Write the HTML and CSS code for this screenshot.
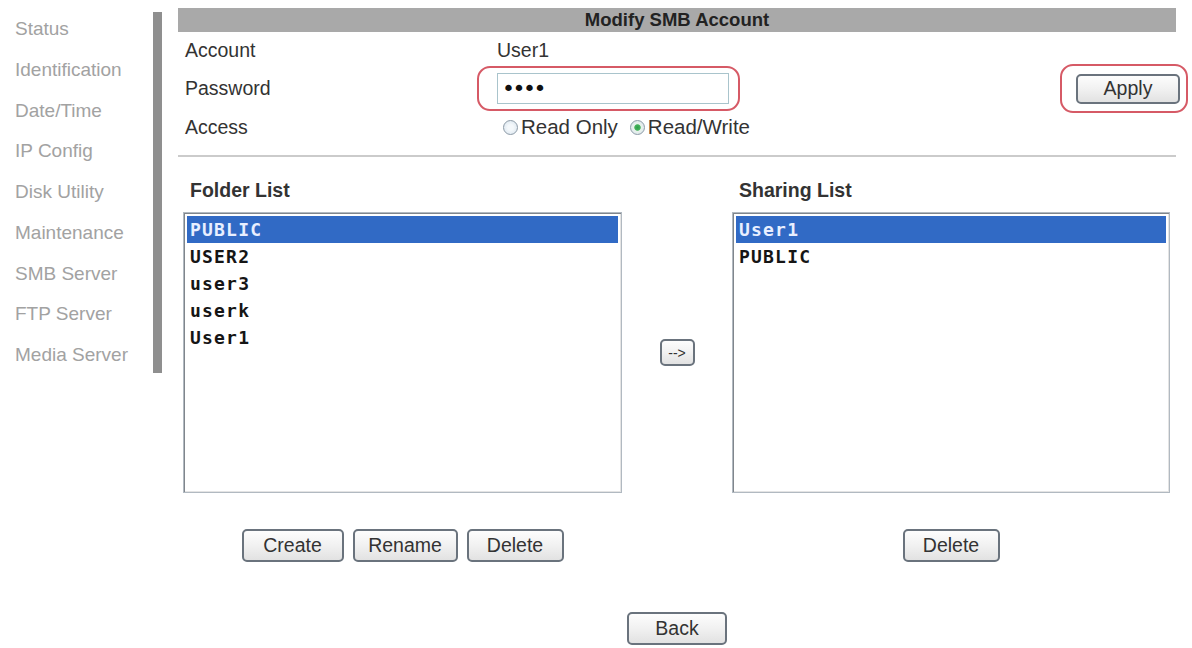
FILE: index.html
```html
<!DOCTYPE html>
<html lang="en">
<head>
    <meta charset="UTF-8">
    <meta name="viewport" content="width=device-width, initial-scale=1.0">
    <title>SMB Server</title>
    <link rel="stylesheet" href="styles.css">
</head>
<body>
    <div class="page">
        <aside class="sidebar">
            <ul>
                <li>Status</li>
                <li>Identification</li>
                <li>Date/Time</li>
                <li>IP Config</li>
                <li>Disk Utility</li>
                <li>Maintenance</li>
                <li>SMB Server</li>
                <li>FTP Server</li>
                <li>Media Server</li>
            </ul>
        </aside>
        <div class="side-bar-line"></div>

        <main class="content">
            <div class="title-bar">Modify SMB Account</div>

            <div class="account-form">
                <div class="label">Account</div>
                <div class="value">User1</div>
                <div></div>

                <div class="label">Password</div>
                <div class="value">
                    <span class="mark mark-input"><input type="password" class="pass" value="1234"></span>
                </div>
                <div class="apply-cell">
                    <span class="mark mark-apply"><button class="btn btn-apply">Apply</button></span>
                </div>

                <div class="label">Access</div>
                <div class="value radios">
                    <label><input type="radio" name="access"> Read Only</label>
                    <label><input type="radio" name="access" checked> Read/Write</label>
                </div>
                <div></div>
            </div>

            <hr class="rule">

            <div class="lists">
                <h3 class="list-title">Folder List</h3>
                <div></div>
                <h3 class="list-title">Sharing List</h3>

                <ul class="listbox">
                    <li class="selected">PUBLIC</li>
                    <li>USER2</li>
                    <li>user3</li>
                    <li>userk</li>
                    <li>User1</li>
                </ul>
                <div class="move">
                    <button class="btn btn-arrow">--&gt;</button>
                </div>
                <ul class="listbox">
                    <li class="selected">User1</li>
                    <li>PUBLIC</li>
                </ul>

                <div class="list-buttons">
                    <button class="btn btn-create">Create</button>
                    <button class="btn btn-rename">Rename</button>
                    <button class="btn btn-delete">Delete</button>
                </div>
                <div></div>
                <div class="list-buttons">
                    <button class="btn btn-delete">Delete</button>
                </div>
            </div>

            <div class="back-row">
                <button class="btn btn-back">Back</button>
            </div>
        </main>
    </div>
</body>
</html>
```

FILE: styles.css
```css
body {
    font-family: "Liberation Sans", Arial, sans-serif;
    margin: 0;
    background-color: white;
    color: #333;
}
.page {
    display: flex;
    align-items: flex-start;
}

/* left menu */
.sidebar {
    width: 153px;
    padding-top: 9px;
}
.sidebar ul {
    list-style: none;
    margin: 0;
    padding: 0 0 0 15px;
}
.sidebar li {
    font-size: 19px;
    line-height: 40.75px;
    color: #a2a2a2;
    white-space: nowrap;
}
.side-bar-line {
    width: 9px;
    height: 361px;
    margin-top: 12px;
    background-color: #8f8f8f;
}

.content {
    width: 998px;
    margin-left: 16px;
    padding-top: 8px;
}
.title-bar {
    height: 24px;
    line-height: 24px;
    background-color: #a9a9a9;
    text-align: center;
    font-weight: bold;
    font-size: 18.5px;
    color: #222;
}

/* account form */
.account-form {
    display: grid;
    grid-template-columns: 312px 1fr auto;
    grid-template-rows: 36px 40px 38px;
    align-items: center;
    padding-left: 7px;
    font-size: 19.5px;
}
.mark {
    display: inline-block;
    border: 2px solid #d65a66;
    border-radius: 13px;
    vertical-align: middle;
}
.mark-input {
    margin-left: -20px;
    padding: 5px 9px 5px 18px;
}
.pass {
    display: block;
    box-sizing: border-box;
    width: 232px;
    height: 31px;
    margin: 0;
    padding: 0 4px;
    border: 1px solid #a9c4cc;
    font-family: "DejaVu Sans", sans-serif;
    font-size: 22px;
    letter-spacing: -2.5px;
    color: #111;
    outline: none;
}
.apply-cell {
    margin-right: -12px;
}
.mark-apply {
    padding: 8px 6px 7px 14px;
}
.radios {
    display: flex;
    gap: 12px;
    margin-left: 6px;
    font-size: 20.5px;
}
.radios label {
    display: flex;
    align-items: center;
}
.radios input {
    appearance: none;
    flex-shrink: 0;
    box-sizing: border-box;
    width: 15px;
    height: 15px;
    margin: 0 3px 0 0;
    border: 1px solid #8c9aa6;
    border-radius: 50%;
    background: radial-gradient(circle, #f4f8fb 30%, #d6e2ec 100%);
}
.radios input:checked {
    background: radial-gradient(circle, #2f9e4a 0, #44b25c 30%, #e9f2ec 40%, #d6e2ec 100%);
}

.rule {
    margin: 9px 0 0;
    border: none;
    height: 2px;
    background-color: #cbcbcb;
}

/* folder lists */
.lists {
    display: grid;
    grid-template-columns: 439px 110px 438px;
    padding-left: 5px;
}
.list-title {
    margin: 22px 0 11px;
    padding-left: 7px;
    font-size: 19.5px;
    line-height: 22px;
    color: #333;
}
.listbox {
    list-style: none;
    margin: 0;
    padding: 3px 3px;
    height: 281px;
    box-sizing: border-box;
    border: 1px solid #b1b9c1;
    box-shadow: inset 1px 1px 0 #80868c, inset -1px -1px 0 #e4e4e4;
    font-family: "DejaVu Sans Mono", monospace;
    font-weight: bold;
    font-size: 18px;
    letter-spacing: 1.2px;
    color: #151515;
}
.listbox li {
    height: 27px;
    line-height: 27px;
    padding-left: 3px;
}
.listbox li.selected {
    background-color: #316ac5;
    color: #e8efff;
}
.move {
    display: flex;
    align-items: center;
    justify-content: center;
}
.list-buttons {
    display: flex;
    justify-content: center;
    gap: 9px;
    margin-top: 36px;
}

/* buttons */
.btn {
    height: 33px;
    padding: 0;
    border: 2px solid #6a737d;
    border-radius: 5px;
    background: linear-gradient(#fdfdfd, #f1f1f1 50%, #e2e2e2);
    font-family: "Liberation Sans", Arial, sans-serif;
    font-size: 19.5px;
    color: #333;
    cursor: pointer;
}
.btn-apply {
    display: block;
    width: 104px;
    height: 30px;
}
.btn-create {
    width: 102px;
}
.btn-rename {
    width: 105px;
}
.btn-delete {
    width: 97px;
}
.btn-back {
    width: 100px;
}
.btn-arrow {
    width: 35px;
    height: 27px;
    font-size: 14px;
}
.back-row {
    display: flex;
    justify-content: center;
    margin-top: 50px;
}
```
